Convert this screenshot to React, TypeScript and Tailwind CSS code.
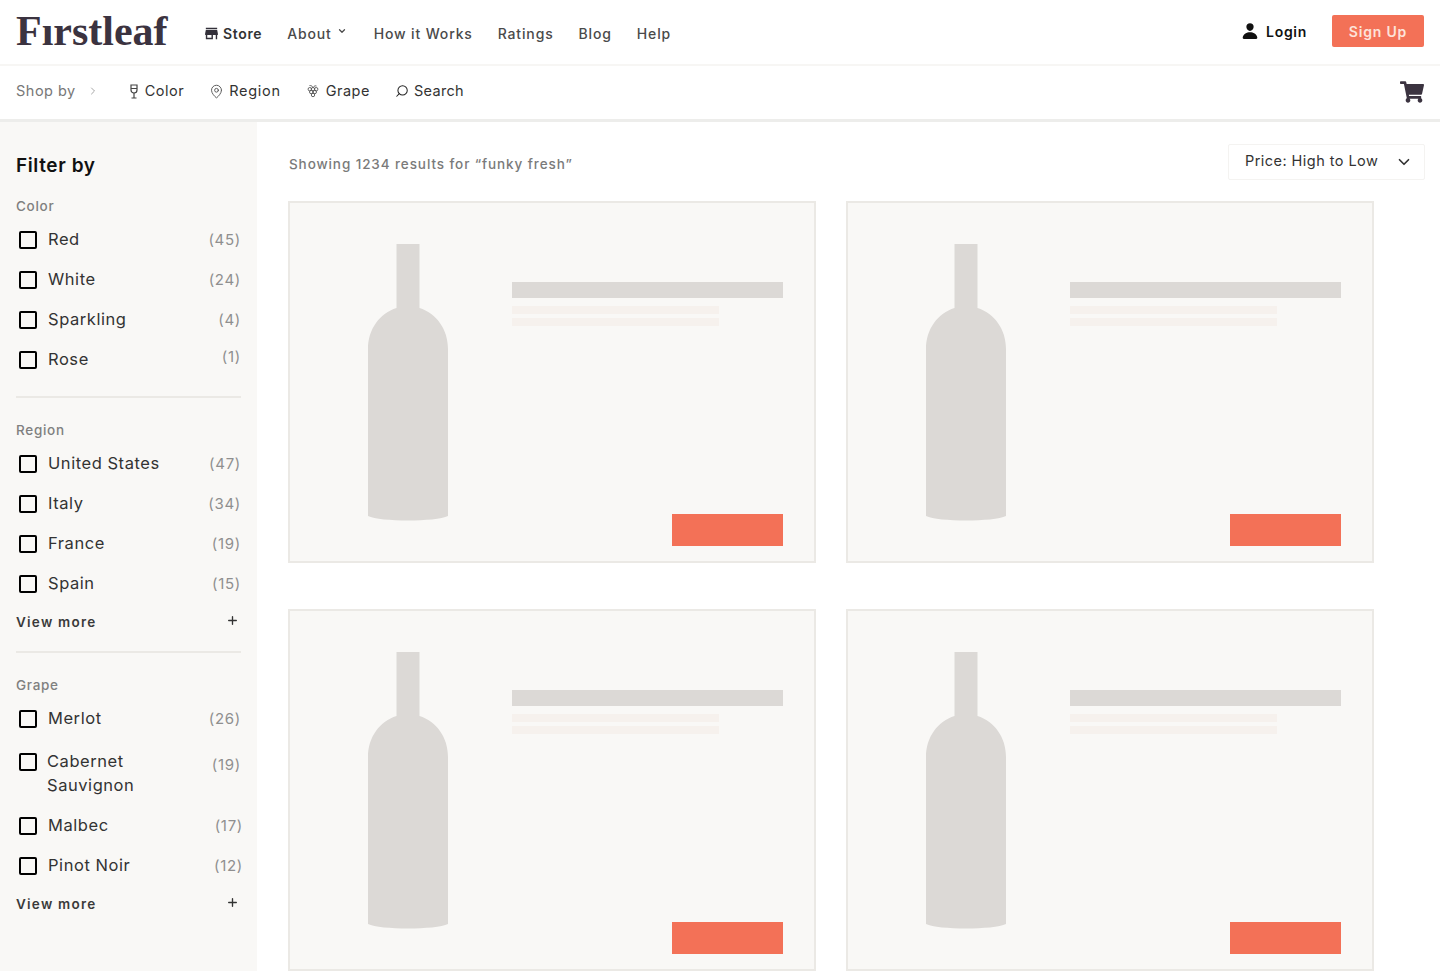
import React from 'react';
import { ChevronDown, ChevronRight, MapPin, Plus, Search } from 'lucide-react';
import { FaShoppingCart } from 'react-icons/fa';
import { IoPerson } from 'react-icons/io5';
import { MdStore } from 'react-icons/md';

const mainLinks = ['How it Works', 'Ratings', 'Blog', 'Help'];

interface FilterItem {
  label: string;
  count: string;
  countClass?: string;
}

const colors: FilterItem[] = [
  { label: 'Red', count: '(45)' },
  { label: 'White', count: '(24)' },
  { label: 'Sparkling', count: '(4)' },
  { label: 'Rose', count: '(1)', countClass: '-translate-y-[3px]' },
];

const regions: FilterItem[] = [
  { label: 'United States', count: '(47)' },
  { label: 'Italy', count: '(34)' },
  { label: 'France', count: '(19)' },
  { label: 'Spain', count: '(15)' },
];

function FilterRow({ item }: { item: FilterItem }) {
  return (
    <div className="flex h-10 items-center pl-[3px]">
      <span className="h-[18px] w-[18px] shrink-0 rounded-[2px] border-2 border-black" />
      <span className="ml-[11px] flex-1 -translate-y-px text-[16.5px] tracking-[0.55px] text-[#333]">{item.label}</span>
      <span className={`text-[15px] tracking-[0.7px] text-[#8f8f8f] ${item.countClass ?? ''}`}>{item.count}</span>
    </div>
  );
}

function ViewMore() {
  return (
    <div className="flex items-center justify-between pr-[2px]">
      <span className="text-[13.5px] font-semibold tracking-[1.25px] text-[#3a3a3a]">View more</span>
      <Plus className="h-[13px] w-[13px] -translate-y-0.5 text-[#333]" strokeWidth={2.5} />
    </div>
  );
}

function WineIcon() {
  return (
    <svg width="10" height="15" viewBox="0 0 10 15" fill="none" stroke="#444" strokeWidth="1.2" className="shrink-0">
      <path d="M2 1H8V6C8 7.8 6.8 9 5 9S2 7.8 2 6Z" />
      <path d="M2 4.5H8M5 9V14M2.5 14H7.5" />
    </svg>
  );
}

function GrapeIcon() {
  return (
    <svg width="12" height="14" viewBox="0 0 12 14" fill="none" stroke="#555" strokeWidth="0.9" className="shrink-0">
      <path d="M6 3.5C5 1.5 3.5 1.5 2.5 1.5M6 3.5C7 2 8.5 1.5 9.5 2" />
      <circle cx="2.8" cy="5.2" r="1.7" />
      <circle cx="6" cy="5.2" r="1.7" />
      <circle cx="9.2" cy="5.2" r="1.7" />
      <circle cx="4.2" cy="8" r="1.7" />
      <circle cx="7.8" cy="8" r="1.7" />
      <circle cx="6" cy="11" r="1.7" />
    </svg>
  );
}

function ProductCard() {
  return (
    <div className="flex h-[362px] w-[528px] border-2 border-[#ebe9e5] bg-[#f9f8f6] pl-[78px] pt-[41px]">
      <svg width="80" height="277" viewBox="0 0 80 277" className="shrink-0">
        <path
          d="M28.5 0H51.5V64C68 69 80 85 80 105V272C68 278 12 278 0 272V105C0 85 12 69 28.5 64Z"
          fill="#dcd9d6"
        />
      </svg>
      <div className="ml-[64px] flex w-[271px] flex-col pb-[15px] pt-[38px]">
        <div className="h-4 bg-[#dcd9d6]" />
        <div className="mt-2 h-2 w-[207px] bg-[#f6f1ed]" />
        <div className="mt-1 h-2 w-[207px] bg-[#f6f1ed]" />
        <div className="mt-auto h-8 w-[111px] self-end bg-[#f37157]" />
      </div>
    </div>
  );
}

export default function App() {
  return (
    <div className="flex h-[971px] flex-col overflow-hidden bg-white font-['Inter','Open_Sans',sans-serif]">
      {/* Top nav */}
      <header className="flex h-[66px] shrink-0 items-center border-b-2 border-[#f7f6f4] pl-4 pr-4">
        <span className="w-[172px] -translate-y-px font-['Liberation_Serif',serif] text-[42px] font-bold leading-none text-[#3b3340]">
          Fırstleaf
        </span>
        <div className="ml-[15px] flex translate-y-px items-center gap-[3px] text-[14px] font-semibold tracking-[0.65px] text-[#333]">
          <MdStore className="h-[17px] w-[17px] text-[#33303a]" />
          Store
        </div>
        <div className="ml-[25px] flex translate-y-px items-center gap-[5px] text-[14px] font-medium tracking-[0.85px] text-[#4a4a4a]">
          About
          <ChevronDown className="h-[10px] w-[10px] -translate-y-0.5" strokeWidth={3} />
        </div>
        <nav className="ml-[27px] flex translate-y-px gap-[25px] text-[14px] font-medium tracking-[0.85px] text-[#4a4a4a]">
          {mainLinks.map((link) => (
            <span key={link}>{link}</span>
          ))}
        </nav>
        <div className="ml-auto flex -translate-y-px items-center gap-[7px] text-[14px] font-semibold tracking-[0.7px] text-[#111]">
          <IoPerson className="h-[18px] w-[18px]" />
          Login
        </div>
        <button className="ml-[25px] h-[32px] w-[92px] -translate-y-px rounded-[2px] bg-[#f37157] text-[14px] font-semibold tracking-[0.8px] text-[#fde3da]">
          Sign Up
        </button>
      </header>

      {/* Shop by */}
      <div className="flex h-[56px] shrink-0 items-center border-b-[3px] border-[#ededeb] pb-[3px] pl-4 pr-4 text-[14.5px] tracking-[0.5px] text-[#333]">
        <span className="text-[#777]">Shop by</span>
        <ChevronRight className="ml-[11px] h-3 w-3 text-[#888]" strokeWidth={1.5} />
        <span className="ml-[30px] flex items-center gap-[6px]">
          <WineIcon />
          Color
        </span>
        <span className="ml-[25px] flex items-center gap-[5px]">
          <MapPin className="h-[15px] w-[15px] text-[#555]" strokeWidth={1.5} />
          <span className="tracking-[0.7px]">Region</span>
        </span>
        <span className="ml-[26px] flex items-center gap-[7px]">
          <GrapeIcon />
          Grape
        </span>
        <span className="ml-[25px] flex items-center gap-[5px]">
          <Search className="h-[14px] w-[14px] -scale-x-100 text-[#222]" strokeWidth={1.75} />
          <span className="tracking-[0.3px]">Search</span>
        </span>
        <FaShoppingCart className="ml-auto h-[22px] w-[24px] translate-y-px text-[#3b3340]" />
      </div>

      <div className="flex min-h-0 flex-1">
        {/* Filters */}
        <aside className="w-[257px] shrink-0 bg-[#f9f8f6] pl-4 pr-[16px] pt-[32px]">
          <h2 className="text-[19px] font-semibold leading-6 tracking-[0.6px] text-[#111]">Filter by</h2>
          <div className="mt-[18px] text-[13.5px] font-medium leading-5 tracking-[0.7px] text-[#808080]">Color</div>
          <div className="mt-[4px]">
            {colors.map((item) => (
              <FilterRow key={item.label} item={item} />
            ))}
          </div>
          <div className="mt-4 h-[2px] bg-[#ebe9e5]" />
          <div className="mt-[22px] text-[13.5px] font-medium leading-5 tracking-[0.7px] text-[#808080]">Region</div>
          <div className="mt-[4px]">
            {regions.map((item) => (
              <FilterRow key={item.label} item={item} />
            ))}
          </div>
          <div className="mt-[8px]">
            <ViewMore />
          </div>
          <div className="mt-[19px] h-[2px] bg-[#ebe9e5]" />
          <div className="mt-[22px] text-[13.5px] font-medium leading-5 tracking-[0.7px] text-[#808080]">Grape</div>
          <div className="mt-[4px]">
            <FilterRow item={{ label: 'Merlot', count: '(26)' }} />
            <div className="mt-[10px] flex pl-[3px]">
              <span className="mt-[4px] h-[18px] w-[18px] shrink-0 rounded-[2px] border-2 border-black" />
              <span className="ml-[10px] flex-1 text-[16.5px] leading-6 tracking-[0.55px] text-[#333]">
                Cabernet
                <br />
                Sauvignon
              </span>
              <span className="-mt-[4px] text-[15px] leading-[40px] tracking-[0.7px] text-[#8f8f8f]">(19)</span>
            </div>
            <div className="mt-[9px] -mr-[2px]">
              <FilterRow item={{ label: 'Malbec', count: '(17)' }} />
            </div>
            <div className="-mr-[2px]">
              <FilterRow item={{ label: 'Pinot Noir', count: '(12)' }} />
            </div>
          </div>
          <div className="mt-[8px]">
            <ViewMore />
          </div>
        </aside>

        {/* Results */}
        <main className="min-w-0 flex-1 pl-[31px] pr-[15px] pt-[22px]">
          <div className="flex items-center justify-between">
            <span className="ml-px pt-[4px] text-[13.5px] font-medium tracking-[0.9px] text-[#7a7a7a]">
              Showing 1234 results for “funky fresh”
            </span>
            <div className="flex h-[36px] w-[197px] items-center justify-between rounded-[2px] border border-[#f4f3f1] pb-[2px] pl-[16px] pr-[11px] text-[14.5px] tracking-[0.45px] text-[#333]">
              Price: High to Low
              <ChevronDown className="h-[18px] w-[18px] translate-y-px" strokeWidth={2.25} />
            </div>
          </div>
          <div className="mt-[21px] grid grid-cols-[528px_528px] gap-x-[30px] gap-y-[46px]">
            <ProductCard />
            <ProductCard />
            <ProductCard />
            <ProductCard />
          </div>
        </main>
      </div>
    </div>
  );
}
